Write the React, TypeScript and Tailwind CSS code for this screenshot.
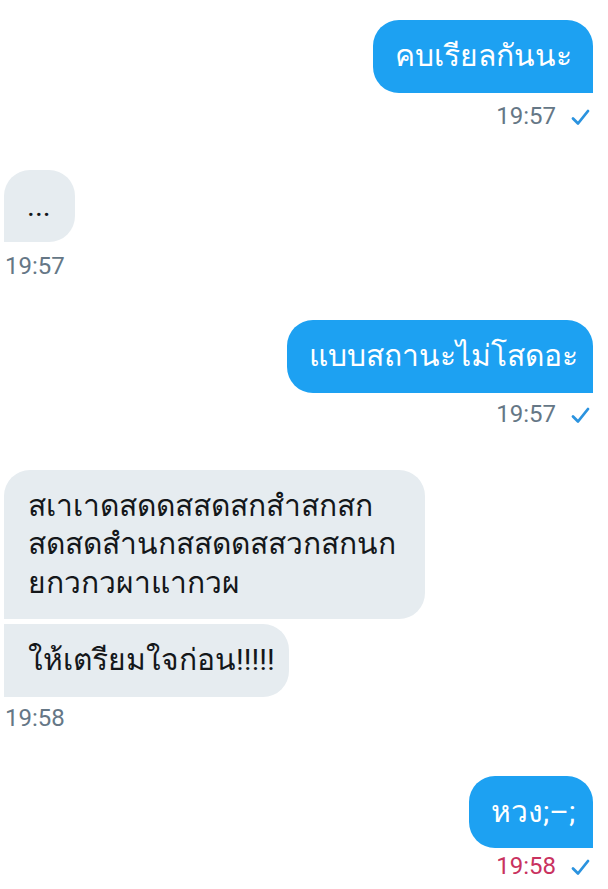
import React from "react";

const font = { fontFamily: "Roboto, 'Noto Sans', 'Liberation Sans', sans-serif" };

function Check() {
  return (
    <svg width="19" height="17" viewBox="0 0 19 17" className="ml-[15px] mt-[3px]">
      <path d="M2 9.5 L7 14.5 L17 2" fill="none" stroke="#2b93df" strokeWidth="2.8" strokeLinecap="round" strokeLinejoin="round" />
    </svg>
  );
}

const textCls = "py-[17px] text-[30px] leading-[38.5px] whitespace-nowrap";

function Out({ text, w }: { text: string; w: string }) {
  return <div className={`${textCls} ${w} px-[22px] self-end rounded-[26px] rounded-br-none bg-[#1da1f2] text-white`}>{text}</div>;
}

function SentTime({ time, pink, mt }: { time: string; pink?: boolean; mt: string }) {
  return (
    <div className={`self-end flex items-center ${mt} mr-[3px] h-[32px] text-[24px] ${pink ? "text-[#c9325f]" : "text-[#657786]"}`}>
      {time}
      <Check />
    </div>
  );
}

export default function App() {
  return (
    <div className="w-[608px] h-[889px] bg-white overflow-hidden pl-[4px] pr-[15px] pt-[20px] flex flex-col" style={font}>
      <Out text="คบเรียลกันนะ" w="w-[220px]" />
      <SentTime time="19:57" mt="mt-[7px]" />

      <div className="mt-[38px] flex flex-col">
        <div className={`${textCls} w-[71px] px-[23px] self-start rounded-[26px] rounded-bl-none bg-[#e6ecf0] text-[#14171a]`}>...</div>
        <div className="mt-[8px] ml-[1px] h-[32px] leading-[32px] text-[24px] text-[#657786]">19:57</div>
      </div>

      <div className="mt-[38px] flex flex-col">
        <Out text="แบบสถานะไม่โสดอะ" w="w-[306px] pl-[22px] pr-[16px]" />
        <SentTime time="19:57" mt="mt-[5px]" />
      </div>

      <div className="mt-[40px] flex flex-col gap-[5px]">
        <div className={`${textCls} self-start w-[421px] px-[24px] rounded-[26px] rounded-bl-none bg-[#e6ecf0] text-[#14171a]`}>
          สเาเาดสดดสสดสกสำสกสก
          <br />
          สดสดสำนกสสดดสสวกสกนก
          <br />
          ยกวกวผาแากวผ
        </div>
        <div className={`${textCls} self-start w-[285px] px-[24px] rounded-[26px] rounded-tl-none rounded-bl-none bg-[#e6ecf0] text-[#14171a]`}>
          ให้เตรียมใจก่อน!!!!!
        </div>
        <div className="ml-[1px] h-[32px] leading-[32px] text-[24px] text-[#657786]">19:58</div>
      </div>

      <div className="mt-[42px] flex flex-col">
        <Out text="หวง;–;" w="w-[124px] pl-[22px] pr-[14px]" />
        <SentTime time="19:58" pink mt="mt-[2px]" />
      </div>
    </div>
  );
}
